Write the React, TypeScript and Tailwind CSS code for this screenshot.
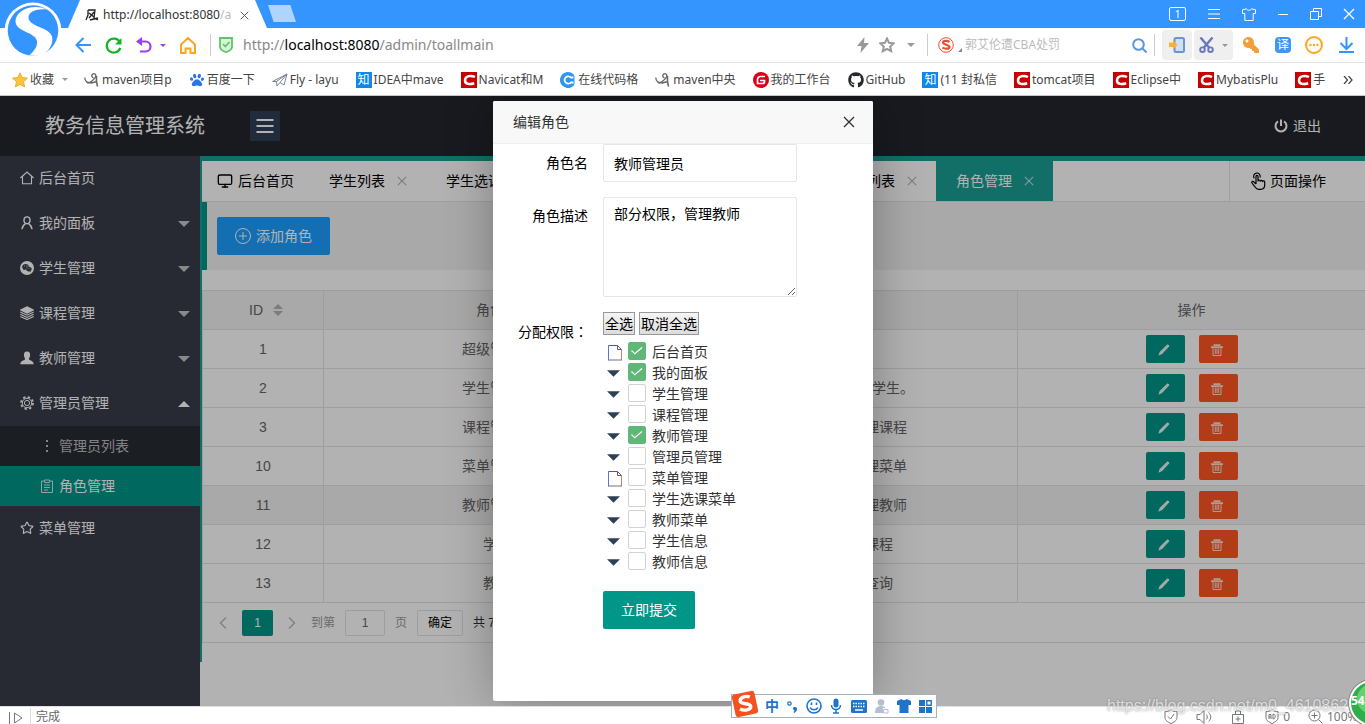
import React, { useState } from "react";
import { FaGithub, FaPaw, FaKey, FaWeixin } from "react-icons/fa";
import { Star, Monitor } from "lucide-react";

const UI_FONT = "font-['Noto_Sans','Noto_Sans_CJK_SC',sans-serif]";
const PAGE_FONT = "font-['Liberation_Sans','Noto_Sans_CJK_SC',sans-serif]";

/* ---------- small drawings ---------- */

function Caret({ className = "", up = false }: { className?: string; up?: boolean }) {
  return (
    <svg viewBox="0 0 12 6" className={className} fill="currentColor" aria-hidden="true">
      <path d={up ? "M0 6 6 0l6 6z" : "M0 0h12L6 6z"} />
    </svg>
  );
}

function Cross({ className = "" }: { className?: string }) {
  return (
    <svg viewBox="0 0 12 12" className={className} fill="none" stroke="currentColor" strokeWidth="1.3" aria-hidden="true">
      <path d="M1 1l10 10M11 1 1 11" />
    </svg>
  );
}

function SogouLogo() {
  return (
    <svg viewBox="0 0 58 58" className="absolute left-1 top-0.5 z-10 size-[58px]" aria-hidden="true">
      <circle cx="29" cy="29" r="28.5" fill="#fff" />
      <circle cx="29" cy="28.500" r="25.3" fill="#3595ff" />
      <path
        d="M43 7.500C29 1 12 8 11.500 19c0 11 20 11 21.500 20 .8 5.500-3 10.500-8 14.500l13 .5C46 48 49.500 41 48 34.500 45 25 25.500 25 24.500 16 24 9.500 33 6.500 43 7.500z"
        fill="#fff"
      />
    </svg>
  );
}

function FeatherIcon({ className = "size-4" }: { className?: string }) {
  return (
    <svg viewBox="0 0 16 16" className={className} fill="none" stroke="#666" aria-hidden="true">
      <path d="M.8 5.500c0 4 2.500 6 7.200 5M9.500 6C6 4.500 8.500.5 11 2c2.500 2-1 6.500-7.500 9.500" strokeWidth="1.300" />
      <path d="M12.500 4c-.5 4 0 7 1 10.500M7 11l6-1.500" strokeWidth="1.600" />
    </svg>
  );
}

function SquareC() {
  return (
    <svg viewBox="0 0 16 16" className="size-4" aria-hidden="true">
      <path fill="#c90000" d="M0 0h16v16H0z" />
      <path d="M14 5C10.500 3.300 4.300 3.300 4 8.300 3.800 12.300 9 12.800 13.200 11.300" fill="none" stroke="#fff" strokeWidth="2.500" />
    </svg>
  );
}

function Zhi() {
  return (
    <span className="flex size-4 items-center justify-center bg-[#0f88eb] text-xs leading-none text-white">知</span>
  );
}

function PlaneIcon() {
  return (
    <svg viewBox="0 0 16 16" className="size-4" fill="none" stroke="#7b8494" strokeWidth="1" aria-hidden="true">
      <path d="M.5 9.500 15 2l-3 11-4-2.500-3 3.500-.5-4.500zM4.500 9.500 15 2 8 10.500" />
    </svg>
  );
}

function RoundC() {
  return (
    <svg viewBox="0 0 16 16" className="size-4" aria-hidden="true">
      <path d="M8 0a8 8 0 1 0 5.500 13.800l1-2.300V4.500l-1-2.300A8 8 0 0 0 8 0z" fill="#2f96ee" />
      <path d="M13.500 5.500H11A3.700 3.700 0 1 0 11 10.500h2.500" fill="none" stroke="#fff" strokeWidth="1.800" />
    </svg>
  );
}

function RoundG() {
  return (
    <svg viewBox="0 0 16 16" className="size-4" aria-hidden="true">
      <circle cx="8" cy="8" r="8" fill="#d8001b" />
      <path d="M12 4.500H7.500a3 3 0 0 0-3 3v4h5a2 2 0 0 0 2-2V8.500H7" fill="none" stroke="#fff" strokeWidth="1.700" />
    </svg>
  );
}

function PencilIcon() {
  return (
    <svg viewBox="0 0 12 12" className="size-3" fill="currentColor" aria-hidden="true">
      <path d="M9.200.6c.8-.6 2.700 1 1.900 1.900l-7 7.600L.4 11.700l1.200-3.800z" />
    </svg>
  );
}

function TrashIcon() {
  return (
    <svg viewBox="0 0 12 12" className="size-3" fill="none" stroke="currentColor" aria-hidden="true">
      <path d="M0 3.200h12M2.500 1.200h7" strokeWidth="1.800" />
      <path d="M2 3.500v8h8v-8M4.300 4.500V10M6 4.500V10M7.700 4.500V10" strokeWidth="1" />
    </svg>
  );
}

function FileIcon() {
  return (
    <svg viewBox="0 0 14 16" className="h-4 w-3.5" fill="none" aria-hidden="true">
      <path d="M.5 15.500V.5" stroke="#5b78c8" />
      <path d="M.5.5h9l4 4M9.500.5v4h4" stroke="#55588a" />
      <path d="M13.500 4.500v11" stroke="#d08060" />
      <path d="M.5 15h13" stroke="#7a6a90" />
    </svg>
  );
}

function HouseIcon() {
  return (
    <svg viewBox="0 0 14 14" className="size-3.5" fill="none" stroke="currentColor" strokeWidth="1.100" aria-hidden="true">
      <path d="M.4 7 7 1l6.600 6M2.500 5.500v7.300h9V5.500" />
    </svg>
  );
}

function PersonIcon() {
  return (
    <svg viewBox="0 0 14 14" className="size-3.5" fill="none" stroke="currentColor" strokeWidth="1.400" aria-hidden="true">
      <ellipse cx="7" cy="4.300" rx="3" ry="3.400" />
      <path d="M2 13.300c.3-3 1.500-4.500 3.500-5.700M12 13.300C11.700 10.300 10.500 8.800 8.500 7.600" />
    </svg>
  );
}

function StackIcon() {
  return (
    <svg viewBox="0 0 14 14" className="size-3.5" fill="none" stroke="currentColor" strokeWidth="1.100" aria-hidden="true">
      <path d="M7 .8 13.500 4 7 7.200.5 4z" fill="currentColor" />
      <path d="M.3 6 7 9.200 13.700 6M.3 8.200 7 11.400l6.700-3.200M.3 10.400 7 13.500l6.700-3.100" />
    </svg>
  );
}

function GearIcon() {
  return (
    <svg viewBox="0 0 14 14" className="size-3.5" fill="none" stroke="currentColor" aria-hidden="true">
      <circle cx="7" cy="7" r="2.600" />
      <circle cx="7" cy="7" r="4.700" />
      <circle cx="7" cy="7" r="6" strokeWidth="1.800" strokeDasharray="2.350 2.362" />
    </svg>
  );
}

function ClipIcon() {
  return (
    <svg viewBox="0 0 14 14" className="size-3.5 opacity-80" fill="none" stroke="currentColor" aria-hidden="true">
      <path d="M4 2H1.500v11.500h11V2H10M4.500 1h5v2.500h-5zM4 6h6M4 8.500h6M4 11h4" />
    </svg>
  );
}

function TapIcon() {
  return (
    <svg viewBox="0 0 15 18" className="h-[18px] w-[15px]" fill="none" stroke="currentColor" strokeWidth="1.200" strokeLinejoin="round" aria-hidden="true">
      <path d="M5 12V4.500c0-1.500 2-1.500 2 0V9c0-1.500 2.200-1.300 2.200.2 0-1.300 2.200-1.200 2.200.4 0-1.200 2.300-1 2.300.5V13c0 2.500-1.500 4.300-4 4.300H7.500c-2 0-3-1.300-4-3L1 11c-.6-1.300.8-2 1.800-1.200L5 12" />
      <path d="M3.300 6.300A3.300 3.300 0 1 1 9 5.500" />
    </svg>
  );
}

/* ---------- browser frame ---------- */

function TitleBar() {
  return (
    <div className="flex h-7 items-stretch bg-[#3595ff] pl-[68px] text-white">
      <div className="flex w-[199px] items-center bg-white pt-0.5 pl-[17px] text-xs text-[#333] [clip-path:polygon(12px_0,187px_0,100%_100%,0_100%)]">
        <svg viewBox="0 0 14 14" className="size-3.5" fill="none" stroke="#222" strokeWidth="1.300" aria-hidden="true">
          <path d="M3 2h7l-1 8 4 2M3 2v5L1 12M4 5l5 4M9 4 4 10M5 12l8-2" />
        </svg>
        <span className="ml-1 w-[131px] overflow-hidden whitespace-nowrap">
          http://localhost:8080<span className="text-[#bbb]">/a</span>
        </span>
        <button aria-label="关闭标签" className="ml-1.5 text-[#555]">
          <Cross className="size-[9px]" />
        </button>
      </div>
      <button aria-label="新标签" className="mt-[5px] ml-px h-[17px] w-7 bg-[#aed5ff] [clip-path:polygon(0_0,80%_0,100%_100%,20%_100%)]" />
      <div className="ml-auto flex items-center gap-[21px] pr-2.5">
        <button className="flex h-3.5 w-[17px] items-center justify-center rounded-xs border border-white text-[10px] leading-none">1</button>
        <button aria-label="菜单">
          <svg viewBox="0 0 14 12" className="h-3 w-3.5" stroke="currentColor" aria-hidden="true"><path d="M1 1.500h12M1 6h12M1 10.500h12" /></svg>
        </button>
        <button aria-label="皮肤">
          <svg viewBox="0 0 14 13" className="h-[13px] w-3.5" fill="none" stroke="currentColor" aria-hidden="true"><path d="M4.500.8c1 2 4 2 5 0l4 1v3.700h-2.300v7H2.800v-7H.5V1.800z" /></svg>
        </button>
        <button aria-label="最小化">
          <svg viewBox="0 0 12 12" className="size-3" stroke="currentColor" aria-hidden="true"><path d="M1 6.500h10" /></svg>
        </button>
        <button aria-label="还原">
          <svg viewBox="0 0 12 12" className="size-3" fill="none" stroke="currentColor" aria-hidden="true"><path d="M.5 3.500h8v8h-8zM3.500 3V.5h8v8H9" /></svg>
        </button>
        <button aria-label="关闭"><Cross className="size-3" /></button>
      </div>
    </div>
  );
}

function ToolBar() {
  return (
    <div className="flex h-[35px] items-center border-b border-[#e4e4e4] bg-white pr-[11px] pl-[75px]">
      <div className="flex items-center gap-3.5">
        <button aria-label="后退">
          <svg viewBox="0 0 16 16" className="size-4" fill="none" stroke="#3595ff" strokeWidth="2" aria-hidden="true"><path d="M16 8H1.500M8.500 1 1.500 8l7 7" /></svg>
        </button>
        <button aria-label="刷新">
          <svg viewBox="0 0 17 17" className="size-[17px]" fill="none" stroke="#12b52a" strokeWidth="2.300" aria-hidden="true"><path d="M15 5.500A7 7 0 1 0 15.300 11" /><path d="M16.500 1v6.500H10z" fill="#12b52a" stroke="none" /></svg>
        </button>
        <button aria-label="恢复" className="flex items-center gap-2 text-[#9b3df0]">
          <svg viewBox="0 0 16 16" className="size-4" fill="none" stroke="currentColor" strokeWidth="2.200" aria-hidden="true"><path d="M2 4.500h7.500a5 5 0 0 1 0 10H4" /><path d="M6 0v9L0 4.500z" fill="currentColor" stroke="none" /></svg>
          <Caret className="h-[3px] w-1.5" />
        </button>
        <button aria-label="主页">
          <svg viewBox="0 0 16 17" className="h-[17px] w-4" fill="none" stroke="#ffa51f" strokeWidth="2" aria-hidden="true"><path d="M1 7.500 8 1l7 6.500V16h-4.500v-4.500h-5V16H1z" /></svg>
        </button>
      </div>
      <span className="ml-3.5 h-[22px] w-px bg-[#ccc]" />
      <svg viewBox="0 0 14 16" className="ml-2 h-4 w-3.5" aria-hidden="true">
        <path d="M1 1h12v9c0 3-3 4-6 5.200C4 14 1 13 1 10z" fill="#d9f2da" stroke="#5fc468" strokeWidth="1.800" />
        <path d="m4 7 2.300 2.500L10.500 5" fill="none" stroke="#5fc468" strokeWidth="1.800" />
      </svg>
      <a href="#url" className="ml-2.5 whitespace-nowrap text-sm text-[#888]">
        http://<span className="text-black">localhost:8080</span>/admin/toallmain
      </a>
      <div className="ml-auto flex items-center text-[#999]">
        <svg viewBox="0 0 12 16" className="h-4 w-3" fill="currentColor" aria-hidden="true"><path d="M7.500 0 0 9h4.500L3.500 16 12 6H7z" /></svg>
        <svg viewBox="0 0 16 16" className="ml-2.5 size-4" fill="none" stroke="currentColor" strokeWidth="2" aria-hidden="true"><path d="m8 1.500 2 4.300 4.700.5-3.500 3.200 1 4.700L8 11.900l-4.200 2.300 1-4.700L1.300 6.300 6 5.800z" /></svg>
        <Caret className="ml-3 h-1 w-2" />
        <span className="ml-3 h-[22px] w-px bg-[#ccc]" />
        <svg viewBox="0 0 16 16" className="ml-2.5 size-4" fill="none" stroke="#f04b32" aria-hidden="true">
          <circle cx="8" cy="8" r="7.300" />
          <path d="M11.500 5c-2-1.800-6.500-1.400-6.500.6 0 2.400 6.500 1.800 6.500 4.300 0 2.300-5 2.300-7 .6" strokeWidth="2.200" />
        </svg>
        <svg viewBox="0 0 4 4" className="mt-2.5 ml-1 size-1" fill="#888" aria-hidden="true"><path d="M4 0v4H0z" /></svg>
        <input aria-label="搜索" placeholder="郭艾伦遭CBA处罚" className="ml-[3px] w-[167px] bg-transparent text-xs outline-none placeholder:text-[#bbb]" />
        <svg viewBox="0 0 15 15" className="size-[15px]" fill="none" stroke="#5a98dc" strokeWidth="2" aria-hidden="true"><circle cx="6.500" cy="6.500" r="5.300" /><path d="m10.500 10.500 4 4" /></svg>
        <span className="ml-[7px] h-[22px] w-px bg-[#ccc]" />
        <button aria-label="手机" className="ml-[7px] flex h-[30px] w-[30px] items-center justify-center rounded-sm bg-[#efefef]">
          <svg viewBox="0 0 16 16" className="size-4" aria-hidden="true"><rect x="5.500" y="1" width="9.500" height="14" rx="1.500" fill="#cfe0f5" stroke="#6b93cf" strokeWidth="2" /><path d="M0 5.500h4V3l4.500 5L4 12.500V10H0z" fill="#fbb03b" /></svg>
        </button>
        <button aria-label="截图" className="ml-0.5 flex h-[30px] w-[39px] items-center justify-center gap-2 rounded-sm bg-[#efefef]">
          <svg viewBox="0 0 15 16" className="h-4 w-[15px]" fill="none" stroke="#6a76bd" strokeWidth="1.900" aria-hidden="true"><path d="m1.500.5 9 10.500M13.500.5 4.500 11" strokeWidth="2.400" /><circle cx="3.500" cy="12.700" r="2.300" /><circle cx="11.500" cy="12.700" r="2.300" /></svg>
          <Caret className="h-[3px] w-1.5" />
        </button>
        <FaKey className="ml-2.5 size-4 -scale-x-100 rotate-0 text-[#f0a037] [transform:none]" />
        <span className="ml-4 flex size-4 items-center justify-center rounded-sm bg-[#4096f7] text-xs leading-none text-white">译</span>
        <svg viewBox="0 0 18 18" className="ml-3.5 size-[18px]" fill="#ffa51f" aria-hidden="true"><circle cx="9" cy="9" r="8" fill="none" stroke="#ffa51f" strokeWidth="2" /><circle cx="5.500" cy="9" r="1.200" /><circle cx="9" cy="9" r="1.200" /><circle cx="12.500" cy="9" r="1.200" /></svg>
        <svg viewBox="0 0 15 16" className="ml-4 h-4 w-[15px]" fill="none" stroke="#3595ff" strokeWidth="2" aria-hidden="true"><path d="M7.500 0v11.500M1.500 6l6 6 6-6M0 15h15" /></svg>
      </div>
    </div>
  );
}

const BOOKMARKS: { icon: React.ReactNode; text: string }[] = [
  { icon: <FeatherIcon />, text: "maven项目p" },
  { icon: <FaPaw className="size-4 p-px text-[#2c72e8]" />, text: "百度一下" },
  { icon: <PlaneIcon />, text: "Fly - layu" },
  { icon: <Zhi />, text: "IDEA中mave" },
  { icon: <SquareC />, text: "Navicat和M" },
  { icon: <RoundC />, text: "在线代码格" },
  { icon: <FeatherIcon />, text: "maven中央" },
  { icon: <RoundG />, text: "我的工作台" },
  { icon: <FaGithub className="size-4 text-[#24292e]" />, text: "GitHub" },
  { icon: <Zhi />, text: "(11 封私信" },
  { icon: <SquareC />, text: "tomcat项目" },
  { icon: <SquareC />, text: "Eclipse中" },
  { icon: <SquareC />, text: "MybatisPlu" },
  { icon: <SquareC />, text: "手把" },
];

function BookmarkBar() {
  return (
    <nav className="flex h-[33px] items-center border-b border-[#c8c8c8] bg-white pt-px pr-3 pl-3 text-xs text-[#444]">
      <button className="flex shrink-0 items-center">
        <svg viewBox="0 0 16 16" className="size-4" aria-hidden="true"><path d="m8 .7 2.300 4.800 5.200.6-3.900 3.600 1 5.300L8 12.500 3.400 15l1-5.300L.5 6.100l5.200-.6z" fill="#fbc43a" stroke="#e0a32a" strokeWidth=".8" /></svg>
        <span className="ml-0.5">收藏</span>
        <Caret className="ml-2 h-[3px] w-1.5 text-[#999]" />
      </button>
      <div className="ml-4 flex min-w-0 flex-1 gap-[17px] overflow-hidden">
        {BOOKMARKS.map((b, i) => (
          <a key={i} href="#bookmark" className="flex shrink-0 items-center gap-0.5 whitespace-nowrap">
            {b.icon}
            {b.text}
          </a>
        ))}
      </div>
      <button aria-label="更多书签" className="ml-[18px] text-[#444]">
        <svg viewBox="0 0 10 8" className="h-2 w-2.5" fill="none" stroke="currentColor" strokeWidth="1.200" aria-hidden="true"><path d="m1 0 3.500 4L1 8M5.500 0 9 4 5.500 8" /></svg>
      </button>
    </nav>
  );
}

function StatusBar() {
  return (
    <footer className="flex h-[18px] items-end overflow-hidden border-t border-[#e0e0e0] bg-white text-xs leading-[15px] text-[#666]">
      <svg viewBox="0 0 14 12" className="ml-[9px] h-3 w-3.5" fill="none" stroke="#777" aria-hidden="true"><path d="M.5 0v12M5.500 1v10l7.500-5z" /></svg>
      <span className="ml-[7px] h-4 w-px bg-[#ddd]" />
      <span className="ml-[5px]">完成</span>
      <div className="ml-auto flex items-center text-[#777]">
        <svg viewBox="0 0 14 15" className="h-[15px] w-3.5" fill="none" stroke="currentColor" aria-hidden="true"><path d="M7 .8c2 1.500 4 1.800 6 1.800v6c0 3-3 4.500-6 6-3-1.500-6-3-6-6v-6c2 0 4-.3 6-1.800zM4 7.500 6.500 10 10 5" /></svg>
        <svg viewBox="0 0 16 14" className="ml-[18px] h-3.5 w-4" fill="none" stroke="currentColor" aria-hidden="true"><path d="M1 4.500h3l4-4v13l-4-4H1zM10.500 4.500c1 1.500 1 3.500 0 5M12.500 2.500c3 2.500 3 6.500 0 9" /></svg>
        <svg viewBox="0 0 14 14" className="ml-[19px] size-3.5" fill="none" stroke="currentColor" aria-hidden="true"><path d="M1.500 4.500h11v9h-11zM4.500 4V1h5v3M7 6.500v5M4.500 9h5" /></svg>
        <svg viewBox="0 0 14 15" className="ml-5 h-[15px] w-3.5" fill="none" stroke="currentColor" aria-hidden="true"><path d="M7 .8c2 1.500 4 1.800 6 1.800v6c0 3-3 4.500-6 6-3-1.500-6-3-6-6v-6c2 0 4-.3 6-1.800zM4 10V5.500h2V10M4 8h2M8 5v5c3 0 3-5 0-5z" /></svg>
        <span className="ml-1">0</span>
        <svg viewBox="0 0 15 15" className="ml-[18px] size-[15px]" fill="none" stroke="currentColor" aria-hidden="true"><circle cx="6.500" cy="6.500" r="5.500" /><path d="m10.500 10.500 4 4M6.500 3.500v6M3.500 6.500h6" /></svg>
        <span className="ml-1 w-[38px]">100%</span>
      </div>
    </footer>
  );
}

/* ---------- admin page ---------- */

type MenuEntry = { icon: React.ReactNode; text: string; arrow?: "down" | "up" };

const MENU: MenuEntry[] = [
  { icon: <HouseIcon />, text: "后台首页" },
  { icon: <PersonIcon />, text: "我的面板", arrow: "down" },
  {
    icon: (
      <span className="flex size-3.5 items-center justify-center rounded-full bg-white">
        <FaWeixin className="size-2.5 text-[#393d49]" />
      </span>
    ),
    text: "学生管理",
    arrow: "down",
  },
  { icon: <StackIcon />, text: "课程管理", arrow: "down" },
  {
    icon: (
      <svg viewBox="0 0 14 14" className="size-3.5" fill="currentColor" aria-hidden="true"><path d="M7 .5c2.500 0 3.500 2 3 4.500-.3 1.500-1 2.500-1.200 3 .3 1.500 4.700 1.500 5 5.200H.2c.3-3.700 4.700-3.700 5-5.200C5 7.500 4.300 6.500 4 5 3.500 2.500 4.500.5 7 .5z" /></svg>
    ),
    text: "教师管理",
    arrow: "down",
  },
  { icon: <GearIcon />, text: "管理员管理", arrow: "up" },
];

function SideBar() {
  return (
    <nav className="w-[200px] shrink-0 bg-[#393d49] text-sm text-white">
      {MENU.map((m) => (
        <a key={m.text} href="#menu" className="flex h-[45px] items-center pr-2.5 pb-0.5 pl-5">
          {m.icon}
          <span className="ml-[5px]">{m.text}</span>
          {m.arrow && <Caret up={m.arrow === "up"} className={m.arrow === "up" ? "mt-0.5 ml-auto h-1.5 w-3" : "mt-0.5 ml-auto h-1.5 w-3 text-white/70"} />}
        </a>
      ))}
      <a href="#admins" className="flex h-10 items-center bg-[#282b33] pl-10 text-white/70">
        <svg viewBox="0 0 14 14" className="size-3.5" fill="currentColor" aria-hidden="true"><path d="M6 1h2v2H6zM6 6h2v2H6zM6 11h2v2H6z" /></svg>
        <span className="ml-[5px]">管理员列表</span>
      </a>
      <a href="#roles" className="flex h-10 items-center bg-[#009688] pl-10">
        <ClipIcon />
        <span className="ml-[5px]">角色管理</span>
      </a>
      <a href="#menus" className="flex h-[45px] items-center pb-0.5 pl-5">
        <Star className="size-3.5" strokeWidth={2} strokeLinejoin="miter" />
        <span className="ml-[5px]">菜单管理</span>
      </a>
    </nav>
  );
}

const TABS = ["学生列表", "学生选课列表", "课程列表", "教师列表", "管理员列表", "角色管理"];

function TabStrip() {
  return (
    <div className="flex h-[41px] items-stretch border-b border-[#e2e2e2] bg-white text-sm text-black">
      <button className="flex w-[107px] items-center pl-[15px]">
        <Monitor className="size-4" strokeWidth={2} />
        <span className="ml-[5px]">后台首页</span>
      </button>
      {TABS.map((t) => {
        const active = t === "角色管理";
        return (
          <button
            key={t}
            className={active ? "flex shrink-0 items-center gap-3 bg-[#1aa094] pr-[19px] pl-5 text-white" : "flex shrink-0 items-center gap-3 pr-[19px] pl-5"}
          >
            {t}
            <Cross className={active ? "size-2.5 text-[#b9dedb]" : "size-2.5 text-[#b2b2b2]"} />
          </button>
        );
      })}
      <button className="ml-auto flex w-[136px] items-center border-l border-[#e2e2e2] pl-[21px]">
        <TapIcon />
        <span className="ml-1">页面操作</span>
      </button>
    </div>
  );
}

const ROWS = [
  { id: 1, role: "超级管理员", desc: "所有权限" },
  { id: 2, role: "学生管理员", desc: "部分权限，管理学生。" },
  { id: 3, role: "课程管理员", desc: "部分权限，管理课程" },
  { id: 10, role: "菜单管理员", desc: "部分权限，管理菜单" },
  { id: 11, role: "教师管理员", desc: "部分权限，管理教师" },
  { id: 12, role: "学生", desc: "学生可以选课程" },
  { id: 13, role: "教师", desc: "教师权限可查询" },
];

const CELL = "h-[39px] border-r border-b border-[#e2e2e2] p-0 text-center font-normal";

function RoleTable() {
  return (
    <table className="w-full table-fixed border-separate border-spacing-0 border-t border-l border-[#e2e2e2] text-sm text-[#666]">
      <thead className="bg-[#f2f2f2]">
        <tr>
          <th className={CELL + " w-[121px]"}>
            <span className="ml-1.5 inline-flex items-center gap-2.5">
              ID
              <span className="flex flex-col gap-0.5 text-[#b2b2b2]">
                <Caret up className="h-[5px] w-2.5" />
                <Caret className="h-[5px] w-2.5" />
              </span>
            </span>
          </th>
          <th className={CELL}>角色名</th>
          <th className={CELL}>角色描述</th>
          <th className="h-[39px] border-b border-[#e2e2e2] p-0 font-normal">操作</th>
        </tr>
      </thead>
      <tbody>
        {ROWS.map((r) => (
          <tr key={r.id} className={r.id === 11 ? "bg-[#f2f2f2]" : ""}>
            <td className={CELL}>{r.id}</td>
            <td className={CELL}>{r.role}</td>
            <td className={CELL}>{r.desc}</td>
            <td className="h-[39px] border-b border-[#e2e2e2] p-0">
              <div className="flex justify-center gap-3.5 text-white/90">
                <button aria-label="编辑" className="flex h-7 w-[39px] items-center justify-center rounded-xs bg-[#009688] pt-0.5 pr-[3px]"><PencilIcon /></button>
                <button aria-label="删除" className="flex h-7 w-[39px] items-center justify-center rounded-xs bg-[#ff5722] pt-0.5 pr-[3px] text-white/80"><TrashIcon /></button>
              </div>
            </td>
          </tr>
        ))}
      </tbody>
    </table>
  );
}

function Pager() {
  return (
    <div className="flex h-10 items-center border-b border-l border-[#e2e2e2] pl-4 text-xs text-[#999]">
      <button aria-label="上一页" className="text-[#bbb]">
        <svg viewBox="0 0 8 12" className="h-3 w-2" fill="none" stroke="currentColor" strokeWidth="1.500" aria-hidden="true"><path d="M7 .5 1.500 6 7 11.500" /></svg>
      </button>
      <button className="ml-[15px] h-[26px] w-[31px] rounded-xs bg-[#009688] text-white">1</button>
      <button aria-label="下一页" className="ml-[15px] text-[#bbb]">
        <svg viewBox="0 0 8 12" className="h-3 w-2" fill="none" stroke="currentColor" strokeWidth="1.500" aria-hidden="true"><path d="M1 .5 6.500 6 1 11.500" /></svg>
      </button>
      <label htmlFor="page" className="ml-[15px]">到第</label>
      <input id="page" defaultValue="1" className="ml-2.5 h-[26px] w-10 rounded-xs border border-[#e2e2e2] text-center text-[#666]" />
      <span className="ml-2.5">页</span>
      <button className="ml-2.5 h-[26px] w-[46px] rounded-xs border border-[#e2e2e2] text-black">确定</button>
      <span className="ml-2.5 text-[#333]">共 7 条</span>
    </div>
  );
}

/* ---------- dialog ---------- */

const PERMISSIONS = [
  { text: "后台首页", leaf: true, on: true },
  { text: "我的面板", on: true },
  { text: "学生管理" },
  { text: "课程管理" },
  { text: "教师管理", on: true },
  { text: "管理员管理" },
  { text: "菜单管理", leaf: true },
  { text: "学生选课菜单" },
  { text: "教师菜单" },
  { text: "学生信息" },
  { text: "教师信息" },
];

const SMALL_BUTTON = "h-[23px] border border-[#999] bg-linear-to-b from-[#f5f5f5] to-[#dcdcdc] px-px text-sm leading-none text-black";
const LABEL = "w-[95px] shrink-0 pt-[9px] text-right leading-5";

function RoleDialog() {
  const [checked, setChecked] = useState<boolean[]>(PERMISSIONS.map((p) => !!p.on));
  const toggle = (i: number) => setChecked(checked.map((c, n) => (n === i ? !c : c)));
  return (
    <div role="dialog" aria-label="编辑角色" className="flex h-[600px] w-[380px] flex-col rounded-xs bg-white text-sm text-black shadow-[1px_1px_50px_rgba(0,0,0,0.3)]">
      <div className="flex h-[43px] shrink-0 items-center justify-between rounded-t-xs border-b border-[#eee] bg-[#f8f8f8] pr-[18px] pl-5 text-[#333]">
        编辑角色
        <button aria-label="关闭"><Cross className="size-3 text-[#2e2d3c]" /></button>
      </div>
      <form className="flex flex-col gap-[15px]" onSubmit={(e) => e.preventDefault()}>
        <div className="flex gap-[15px]">
          <label htmlFor="name" className={LABEL}>角色名</label>
          <input id="name" defaultValue="教师管理员" className="h-[38px] w-[194px] rounded-xs border border-[#e6e6e6] pl-2.5 outline-none" />
        </div>
        <div className="flex gap-[15px]">
          <label htmlFor="desc" className={LABEL}>角色描述</label>
          <textarea id="desc" defaultValue="部分权限，管理教师" className="h-[100px] w-[194px] rounded-xs border border-[#e6e6e6] px-2.5 py-1.5 leading-5 outline-none" />
        </div>
        <div className="flex gap-[15px]">
          <span className={LABEL}>
            分配权限<span className="font-['Noto_Sans_CJK_TC',sans-serif]" lang="zh-TW">：</span>
          </span>
          <div>
            <div className="flex gap-1">
              <button type="button" className={SMALL_BUTTON} onClick={() => setChecked(PERMISSIONS.map(() => true))}>全选</button>
              <button type="button" className={SMALL_BUTTON} onClick={() => setChecked(PERMISSIONS.map(() => false))}>取消全选</button>
            </div>
            <ul className="mt-[7px]">
              {PERMISSIONS.map((p, i) => (
                <li key={p.text} className="flex h-[21px] items-center pl-1">
                  <span className="flex w-[21px] items-center">
                    {p.leaf ? (
                      <span className="pl-px"><FileIcon /></span>
                    ) : (
                      <button type="button" aria-label={"展开" + p.text}><Caret className="h-[7px] w-[13px] text-[#2f4056]" /></button>
                    )}
                  </span>
                  <label className="flex items-center">
                    <span className="relative flex size-[18px] -translate-y-0.5">
                      <input type="checkbox" checked={checked[i]} onChange={() => toggle(i)} className="size-[18px] appearance-none rounded-xs border border-[#d2d2d2] checked:border-[#5fb878] checked:bg-[#5fb878]" />
                      {checked[i] && (
                        <svg viewBox="0 0 18 18" className="pointer-events-none absolute inset-0" fill="none" stroke="#fff" strokeWidth="1.200" aria-hidden="true"><path d="m3.500 8.500 3.300 3.300L14 5.500" /></svg>
                      )}
                    </span>
                    <span className="ml-1.5 leading-[21px] text-[#333]">{p.text}</span>
                  </label>
                </li>
              ))}
            </ul>
            <button type="submit" className="mt-[18px] h-[38px] rounded-xs bg-[#009688] px-[18px] text-white">立即提交</button>
          </div>
        </div>
      </form>
    </div>
  );
}

/* ---------- floating items over the page ---------- */

function InputMethodBar() {
  return (
    <div className="absolute right-[428px] bottom-1.5 z-20 flex h-6 w-[206px] items-center justify-between border border-[#a9afbd] bg-white pr-1 pl-[33px] text-[#1f74c9]">
      <svg viewBox="0 0 28 28" className="absolute -top-[5px] -left-px size-7" aria-hidden="true">
        <rect x="2.500" y="2.500" width="23" height="23" rx="3" fill="#f4511e" transform="rotate(-12 14 14)" />
        <path d="M19.500 7.500c-4-2-10-.5-10 3 0 4 10 2.500 10 6.500 0 3.500-7 4-11 1.500" fill="none" stroke="#fff" strokeWidth="3.400" transform="rotate(-6 14 14)" />
      </svg>
      <span className="text-sm leading-none font-bold">中</span>
      <svg viewBox="0 0 11 13" className="h-[13px] w-[11px]" aria-hidden="true"><circle cx="2.500" cy="3.500" r="1.700" fill="none" stroke="currentColor" strokeWidth="1.200" /><path d="M6.300 7.500C10 5.500 12 10 7.300 13l-.8-1c1.200-1 1.200-1.600.2-2.200-1-.6-1-1.700-.4-2.300z" fill="currentColor" /></svg>
      <svg viewBox="0 0 16 16" className="size-4 shrink-0" fill="none" stroke="currentColor" strokeWidth="1.600" aria-hidden="true"><circle cx="8" cy="8" r="7" /><path d="M5.500 4.500V7M10.500 4.500V7M4 9.500c1.500 3 6.500 3 8 0" /></svg>
      <svg viewBox="0 0 12 16" className="h-4 w-3 shrink-0" fill="none" stroke="currentColor" strokeWidth="1.500" aria-hidden="true"><rect x="3.500" y=".5" width="5" height="9" rx="2.500" fill="currentColor" stroke="none" /><path d="M1.500 7c0 6 9 6 9 0M6 12v3M3 15h6" /></svg>
      <svg viewBox="0 0 16 13" className="h-[13px] w-4 shrink-0" aria-hidden="true"><rect width="16" height="13" rx="1.500" fill="currentColor" /><path d="M2 3.500h12M2 6.500h12" stroke="#fff" strokeWidth="1.500" strokeDasharray="1.500 1" /><path d="M4 10h8" stroke="#fff" strokeWidth="1.500" /></svg>
      <svg viewBox="0 0 14 15" className="h-[15px] w-3.5 shrink-0" fill="#b4bfd2" aria-hidden="true"><circle cx="6" cy="3.500" r="3.300" /><path d="M0 14c0-5 2-7 6-7 2 0 3.500.5 4.500 2H8v5z" /><path d="M8.500 10.500H13V14H8.500z" fill="none" stroke="#b4bfd2" /></svg>
      <svg viewBox="0 0 14 14" className="size-3.5 shrink-0" fill="currentColor" aria-hidden="true"><path d="M4.500 0c1 1.500 4 1.500 5 0L14 2v4h-2.500v8h-9V6H0V2z" /></svg>
      <svg viewBox="0 0 13 13" className="size-[13px] shrink-0" fill="currentColor" aria-hidden="true"><path d="M0 0h6v6H0zM0 7h6v6H0zM7 7h6v6H7z" /><path d="M7.800.8h4.400v4.400H7.800z" fill="none" stroke="currentColor" strokeWidth="1.400" /></svg>
    </div>
  );
}

function GreenBall() {
  return (
    <div className="absolute right-0 bottom-0 z-20 h-[45px] w-[18px] overflow-hidden">
      <svg viewBox="0 0 18 45" className="h-[45px] w-[18px]" aria-hidden="true">
        <circle cx="25" cy="24" r="24" fill="#888" />
        <circle cx="25" cy="24" r="23" fill="#fff" />
        <circle cx="25" cy="24" r="21" fill="#2fae4b" />
        <circle cx="25" cy="20" r="15" fill="#63d072" />
      </svg>
      <span className="absolute top-4 left-1 text-xs leading-none font-bold text-white">54</span>
    </div>
  );
}

export default function App() {
  return (
    <div className={"relative flex h-screen flex-col overflow-hidden " + UI_FONT}>
      <SogouLogo />
      <TitleBar />
      <ToolBar />
      <BookmarkBar />
      <main className={"relative flex min-h-0 flex-1 flex-col overflow-hidden bg-white " + PAGE_FONT}>
        <header className="flex h-[60px] shrink-0 items-center bg-[#23262e] pr-11 pl-[45px] text-white">
          <h1 className="text-xl font-normal">教务信息管理系统</h1>
          <button aria-label="收起菜单" className="ml-[45px] flex size-[30px] items-center justify-center bg-[#2f4056]">
            <svg viewBox="0 0 18 14" className="h-3.5 w-[18px]" stroke="currentColor" strokeWidth="2" aria-hidden="true"><path d="M.5 1h17M.5 7h17M.5 13h17" /></svg>
          </button>
          <a href="#logout" className="ml-auto flex items-center gap-[5px] text-sm">
            <svg viewBox="0 0 14 14" className="size-3.5" fill="none" stroke="currentColor" strokeWidth="2" aria-hidden="true"><path d="M4 2.300a5.500 5.500 0 1 0 6 0M7 .5v6.500" /></svg>
            退出
          </a>
        </header>
        <div className="flex min-h-0 flex-1 items-stretch">
          <SideBar />
          <div className="min-w-0 flex-1">
            <section className="border-t-[5px] border-l-2 border-[#1aa094] pb-[19px]">
              <TabStrip />
              <div className="border-l-[5px] border-[#009688] bg-[#f2f2f2] py-[15px] pl-2.5">
                <button className="flex h-[38px] items-center gap-[5px] rounded-xs bg-[#1e9fff] px-[18px] text-sm text-white">
                  <svg viewBox="0 0 16 16" className="size-4" fill="none" stroke="currentColor" aria-hidden="true"><circle cx="8" cy="8" r="7.500" /><path d="M8 4v8M4 8h8" /></svg>
                  添加角色
                </button>
              </div>
              <div className="pt-5">
                <RoleTable />
                <Pager />
              </div>
            </section>
          </div>
        </div>
        <div className="absolute inset-0 flex items-center justify-center bg-black/30 pl-px">
          <RoleDialog />
        </div>
      </main>
      <StatusBar />
      <InputMethodBar />
      <span className="absolute right-0 bottom-2 z-10 w-[258px] whitespace-nowrap font-['Liberation_Sans',sans-serif] text-base leading-5 text-white/70 [text-shadow:0_0_2px_rgba(90,90,90,0.7)]">
        https://blog.csdn.net/m0_46108627
      </span>
      <GreenBall />
    </div>
  );
}
